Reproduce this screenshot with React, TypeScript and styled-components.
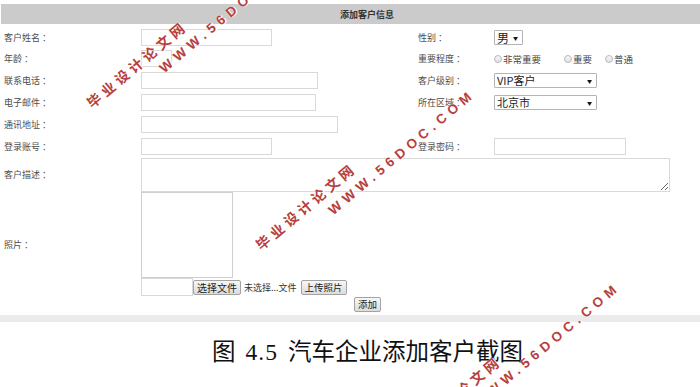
import styled, { createGlobalStyle } from "styled-components";

const GlobalStyle = createGlobalStyle`
  html, body {
    margin: 0;
    padding: 0;
    background: #fff;
  }
  body {
    font-family: "Noto Sans CJK SC", "Liberation Sans", sans-serif;
  }
`;

const Page = styled.div`
  position: relative;
  width: 700px;
  height: 387px;
  overflow: hidden;
  background: #fff;
`;

const Title = styled.div`
  margin: 4px 0 0 1px;
  height: 20px;
  background: #cbcbcb;
  display: flex;
  align-items: center;
  justify-content: center;
  padding-left: 33px;
  font-size: 9px;
  font-weight: bold;
  color: #333;
`;

const Form = styled.div`
  display: grid;
  grid-template-columns: 137px 277px 76px 1fr;
  grid-template-rows: 22px 21px 22px 22px 22px 22px 35px 104px 16px;
  padding: 2px 0 0 4px;
`;

const Label = styled.div`
  display: flex;
  align-items: center;
  font-size: 9px;
  color: #4d4d4d;
  white-space: nowrap;
`;

const Field = styled.div<{ $span?: number }>`
  display: flex;
  align-items: center;
  grid-column: span ${(p) => p.$span ?? 1};
`;

const TextInput = styled.input<{ $w: number }>`
  width: ${(p) => p.$w}px;
  height: 17px;
  box-sizing: border-box;
  border: 1px solid #d9d9d9;
  padding: 0 2px;
  margin: 0;
  outline: none;
  font-size: 9px;
`;

const TextArea = styled.textarea`
  width: 529px;
  height: 34px;
  box-sizing: border-box;
  border: 1px solid #d9d9d9;
  margin: 0;
  padding: 2px;
  outline: none;
`;

const SelectBox = styled.div<{ $w: number; $size: number }>`
  display: flex;
  align-items: center;
  width: ${(p) => p.$w}px;
  height: 15px;
  box-sizing: border-box;
  border: 1px solid #b4b4b4;
  border-radius: 1px;
  padding: 0 4px 0 2px;
  font-size: ${(p) => p.$size}px;
  color: #222;
`;

const NativeSelect = styled.select`
  appearance: none;
  flex: 1;
  min-width: 0;
  border: none;
  background: transparent;
  font: inherit;
  color: inherit;
  padding: 0;
  margin: 0;
  outline: none;
`;

const Arrow = styled.span`
  font-size: 5px;
  color: #111;
`;

const RadioItem = styled.label<{ $w: number }>`
  display: flex;
  align-items: center;
  width: ${(p) => p.$w}px;
  font-size: 9.5px;
  color: #444;
  white-space: nowrap;
`;

const Radio = styled.input`
  appearance: none;
  width: 8px;
  height: 8px;
  margin: 0 1px 0 0;
  box-sizing: border-box;
  border: 1px solid #b9b9b9;
  border-radius: 50%;
  background: linear-gradient(#f6f6f6, #e2e2e2);
`;

const PhotoCell = styled.div`
  grid-column: span 3;
  display: flex;
  flex-direction: column;
  align-items: flex-start;
`;

const ImageBox = styled.div`
  width: 92px;
  height: 86px;
  box-sizing: border-box;
  border: 1px solid #cfcfcf;
`;

const FileRow = styled.div`
  display: flex;
  align-items: center;
  height: 18px;
`;

const FileBox = styled.div`
  width: 52px;
  height: 18px;
  box-sizing: border-box;
  border: 1px solid #d9d9d9;
`;

const GrayButton = styled.button<{ $size?: number }>`
  height: 15px;
  box-sizing: border-box;
  padding: 0 3px;
  margin: 0;
  border: 1px solid #a3a3a3;
  border-radius: 2px;
  background: linear-gradient(#f7f7f7, #dcdcdc);
  font-family: inherit;
  font-size: ${(p) => p.$size ?? 9.5}px;
  line-height: 13px;
  color: #222;
`;

const FileHint = styled.span`
  margin: 0 4px 0 3px;
  font-size: 9px;
  color: #333;
  white-space: nowrap;
`;

const AddRow = styled.div`
  grid-column: span 4;
  display: flex;
  align-items: center;
  padding-left: 350px;
`;

const FooterBar = styled.div`
  margin-top: 3px;
  height: 7px;
  background: #ebebeb;
`;

const Caption = styled.div`
  display: flex;
  justify-content: center;
  padding-left: 35px;
  margin-top: 15px;
  font-family: "Liberation Serif", "Noto Sans CJK SC", serif;
  font-size: 23.5px;
  line-height: 30px;
  color: #111;
`;

const Num = styled.span`
  margin: 0 10px;
  letter-spacing: 1px;
`;

const Watermark = styled.div<{ $x: number; $y: number }>`
  position: absolute;
  left: ${(p) => p.$x}px;
  top: ${(p) => p.$y}px;
  transform: rotate(-40deg);
  transform-origin: 0 0;
  color: #b73f3d;
  font-weight: bold;
  line-height: 1;
  white-space: nowrap;
  pointer-events: none;
  text-shadow: 0 0 1px #fff, 1px 1px 0 #fff;
`;

const MarkCn = styled.div`
  font-family: "Noto Sans CJK SC", sans-serif;
  font-size: 14px;
  letter-spacing: 4px;
`;

const MarkEn = styled.div`
  margin: 7px 0 0 78px;
  font-family: "Liberation Sans", sans-serif;
  font-size: 13.5px;
  letter-spacing: 5px;
`;

const marks = [
  { x: 84, y: 99 },
  { x: 253, y: 241 },
  { x: 398, y: 434 },
];

export default function App() {
  return (
    <Page>
      <GlobalStyle />
      <Title>添加客户信息</Title>
      <Form>
        <Label>客户姓名 ：</Label>
        <Field>
          <TextInput $w={131} />
        </Field>
        <Label>性别 ：</Label>
        <Field>
          <SelectBox $w={29} $size={12}>
            <NativeSelect defaultValue="男">
              <option>男</option>
              <option>女</option>
            </NativeSelect>
            <Arrow>▼</Arrow>
          </SelectBox>
        </Field>

        <Label>年龄 ：</Label>
        <Field>
          <TextInput $w={31} />
        </Field>
        <Label>重要程度 ：</Label>
        <Field>
          <RadioItem $w={70}>
            <Radio type="radio" name="level" />
            非常重要
          </RadioItem>
          <RadioItem $w={41}>
            <Radio type="radio" name="level" />
            重要
          </RadioItem>
          <RadioItem $w={40}>
            <Radio type="radio" name="level" />
            普通
          </RadioItem>
        </Field>

        <Label>联系电话 ：</Label>
        <Field>
          <TextInput $w={177} />
        </Field>
        <Label>客户级别 ：</Label>
        <Field>
          <SelectBox $w={103} $size={11}>
            <NativeSelect defaultValue="VIP客户">
              <option>VIP客户</option>
              <option>普通客户</option>
            </NativeSelect>
            <Arrow>▼</Arrow>
          </SelectBox>
        </Field>

        <Label>电子邮件 ：</Label>
        <Field>
          <TextInput $w={175} />
        </Field>
        <Label>所在区域 ：</Label>
        <Field>
          <SelectBox $w={103} $size={11}>
            <NativeSelect defaultValue="北京市">
              <option>北京市</option>
              <option>上海市</option>
            </NativeSelect>
            <Arrow>▼</Arrow>
          </SelectBox>
        </Field>

        <Label>通讯地址 ：</Label>
        <Field $span={3}>
          <TextInput $w={197} />
        </Field>

        <Label>登录账号 ：</Label>
        <Field>
          <TextInput $w={131} />
        </Field>
        <Label>登录密码 ：</Label>
        <Field>
          <TextInput $w={132} type="password" />
        </Field>

        <Label>客户描述 ：</Label>
        <Field $span={3}>
          <TextArea />
        </Field>

        <Label>照片 ：</Label>
        <PhotoCell>
          <ImageBox />
          <FileRow>
            <FileBox />
            <GrayButton $size={10}>选择文件</GrayButton>
            <FileHint>未选择...文件</FileHint>
            <GrayButton>上传照片</GrayButton>
          </FileRow>
        </PhotoCell>

        <AddRow>
          <GrayButton>添加</GrayButton>
        </AddRow>
      </Form>
      <FooterBar />
      <Caption>
        图<Num>4.5</Num>汽车企业添加客户截图
      </Caption>

      {marks.map((m, i) => (
        <Watermark key={i} $x={m.x} $y={m.y}>
          <MarkCn>毕业设计论文网</MarkCn>
          <MarkEn>WWW.56DOC.COM</MarkEn>
        </Watermark>
      ))}
    </Page>
  );
}
